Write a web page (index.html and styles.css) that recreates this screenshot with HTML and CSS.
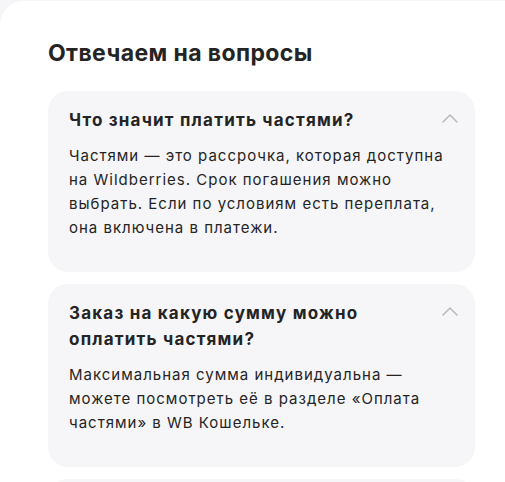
FILE: index.html
```html
<!DOCTYPE html>
<html lang="ru">
  <head>
    <meta charset="utf-8">
    <title>Отвечаем на вопросы</title>
    <link rel="stylesheet" href="styles.css">
  </head>

  <body>
    <div class="panel">
      <h2 class="faq-title">Отвечаем на вопросы</h2>

      <div class="faq-list">
        <div class="faq-item">
          <div class="faq-head">
            <h3 class="faq-question">Что значит платить частями?</h3>
            <svg class="faq-chevron" width="16" height="16" viewBox="0 0 16 16">
              <polyline points="1,11 8,4 15,11" />
            </svg>
          </div>
          <p class="faq-answer">
            Частями — это рассрочка, которая доступна на Wildberries. Срок
            погашения можно выбрать. Если по условиям есть переплата, она
            включена в платежи.
          </p>
        </div>

        <div class="faq-item">
          <div class="faq-head">
            <h3 class="faq-question">Заказ на какую сумму можно оплатить частями?</h3>
            <svg class="faq-chevron" width="16" height="16" viewBox="0 0 16 16">
              <polyline points="1,11 8,4 15,11" />
            </svg>
          </div>
          <p class="faq-answer">
            Максимальная сумма индивидуальна —<br>
            можете посмотреть её в разделе «Оплата частями» в WB Кошельке.
          </p>
        </div>

        <!-- next item starts right at the bottom edge -->
        <div class="faq-item faq-item-next"></div>
      </div>
    </div>
  </body>
</html>
```

FILE: styles.css
```css
body {
  margin: 0;
  background-color: #f6f6f9;
  font-family: Inter, "Noto Sans", sans-serif;
  color: #242424;
  overflow: hidden;
}

.panel {
  margin-top: 1px;
  min-height: 600px;
  padding: 38px 30px 0 48px;
  background-color: #ffffff;
  border-radius: 24px 0 0 0;
}

.faq-title {
  margin: 0 0 24px;
  font-size: 23px;
  line-height: 28px;
  font-weight: 700;
  letter-spacing: 0.4px;
}

.faq-list {
  display: flex;
  flex-direction: column;
  gap: 12px;
}

.faq-item {
  padding: 16px 17px 32px 21px;
  background-color: #f6f6f9;
  border-radius: 20px;
}

.faq-item-next {
  height: 40px;
}

.faq-head {
  display: flex;
  align-items: flex-start;
  gap: 24px;
}

.faq-question {
  flex: 1;
  margin: 0;
  font-size: 17px;
  line-height: 26px;
  font-weight: 700;
  letter-spacing: 1.2px;
}

.faq-chevron {
  flex: none;
  margin-top: 4px;
}

.faq-chevron polyline {
  fill: none;
  stroke: #b8b8c0;
  stroke-width: 1.5;
  stroke-linecap: round;
  stroke-linejoin: round;
}

.faq-answer {
  margin: 11px 0 0;
  font-size: 15px;
  line-height: 24px;
  letter-spacing: 1px;
}
```
